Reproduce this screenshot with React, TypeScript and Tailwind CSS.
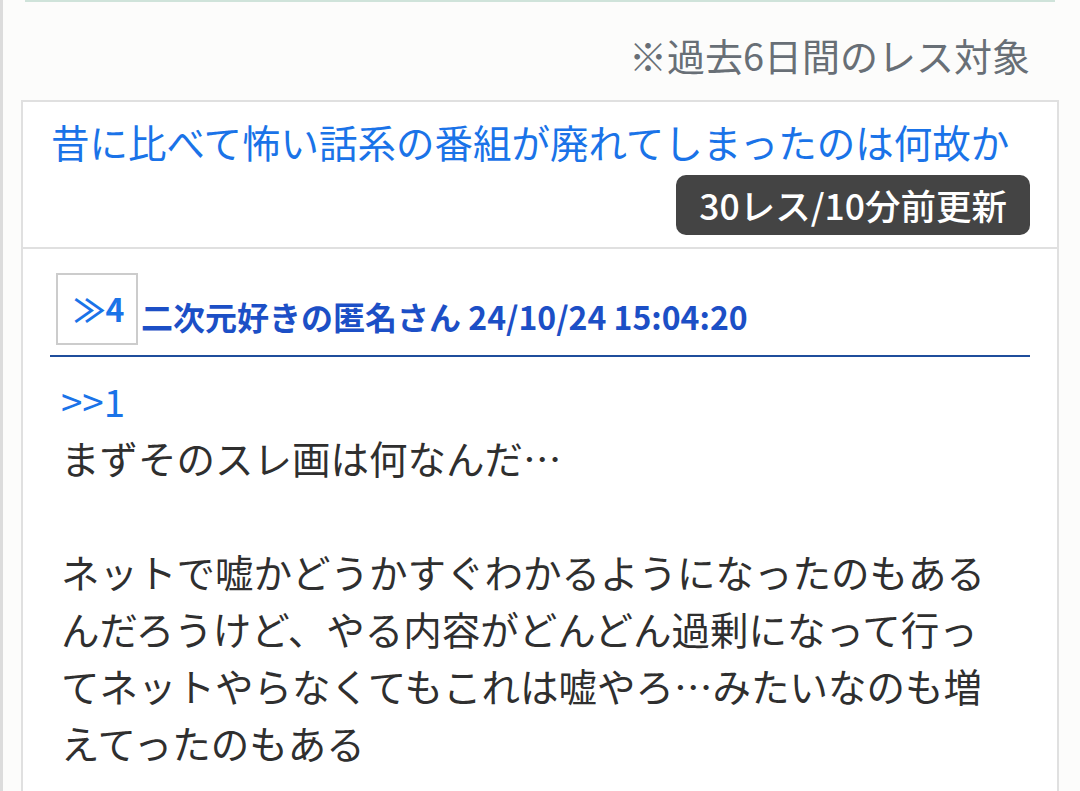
import React from "react";

const font = { fontFamily: '"Noto Sans CJK JP", "Noto Sans", sans-serif' };

export default function App() {
  return (
    <div
      className="min-h-[791px] bg-[#fcfcfb] border-l-[3px] border-[#dcdcdc] overflow-hidden"
      style={font}
    >
      <div className="ml-[22px] mr-[25px] h-[2px] bg-[#cfe3da]" />
      <div className="h-[98px] pt-[8px] flex items-center justify-end pr-[50px]">
        <span className="text-[38px] leading-none text-[#686f76]">
          ※過去6日間のレス対象
        </span>
      </div>
      <div className="ml-[18px] mr-[21px] border-2 border-[#e0e0e0] bg-white">
        <div className="pl-[28px] pr-[27px] pt-[13px] pb-[12px] border-b-2 border-[#e0e0e0]">
          <div className="text-[38.5px] leading-[52px] text-[#1a73e8]">
            昔に比べて怖い話系の番組が廃れてしまったのは何故か
          </div>
          <div className="flex justify-end mt-[8px]">
            <span className="bg-[#444444] text-white text-[35.5px] font-medium leading-[60px] h-[60px] px-[23px] rounded-[10px]">
              30レス/10分前更新
            </span>
          </div>
        </div>
        <div className="pt-[24px] pb-[40px]">
          <div className="mx-[27px] flex items-center pl-[6px] pb-[10px] border-b-2 border-[#1f4e9c]">
            <div className="w-[82px] h-[72px] border-2 border-[#cccccc] flex items-center justify-center text-[#1a73e8] text-[32px] font-bold">
              <span className="-mt-[2px] ml-[4px]">≫4</span>
            </div>
            <span className="ml-[3px] mt-[14px] text-[#1c4fc6] text-[32px] font-bold leading-none">
              二次元好きの匿名さん 24/10/24 15:04:20
            </span>
          </div>
          <div className="ml-[38px] mr-[60px] pt-[15px] text-[38.5px] leading-[57px] text-[#2f2f2f]">
            <div className="text-[#1a73e8]">&gt;&gt;1</div>
            <div className="whitespace-pre-wrap break-all">
              {"まずそのスレ画は何なんだ…\n\nネットで嘘かどうかすぐわかるようになったのもあるんだろうけど、やる内容がどんどん過剰になって行ってネットやらなくてもこれは嘘やろ…みたいなのも増えてったのもある"}
            </div>
          </div>
        </div>
      </div>
    </div>
  );
}
